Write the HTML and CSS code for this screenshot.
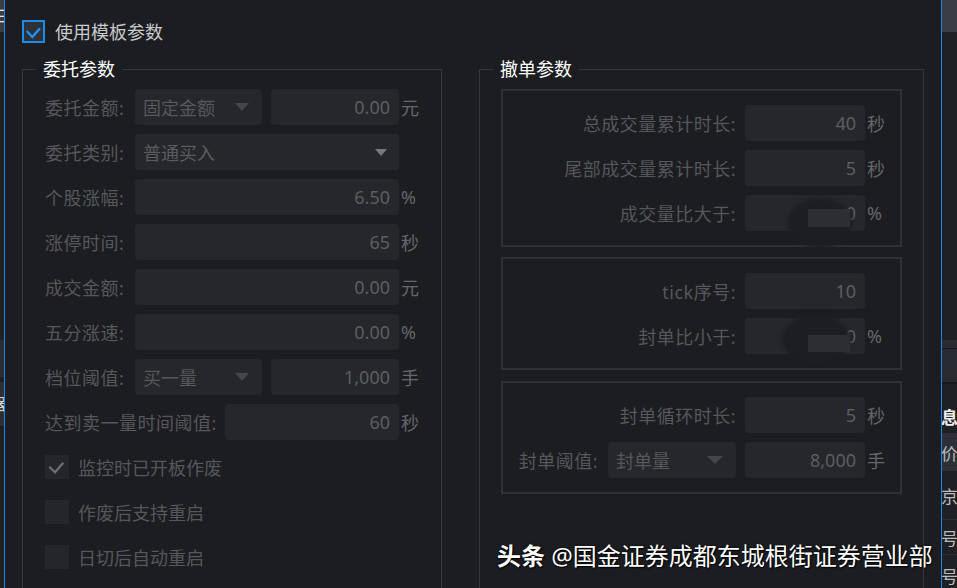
FILE: index.html
```html
<!DOCTYPE html>
<html lang="zh-CN">
<head>
    <meta charset="UTF-8">
    <title>模板参数</title>
    <link rel="stylesheet" href="styles.css">
</head>
<body>
<div class="screen">
    <!-- 背景窗口左侧残边 -->
    <div class="strip strip-left">
        <div class="sl-top">三</div>
        <div class="sl-dark"></div>
        <div class="sl-band"></div>
        <div class="sl-dark2"></div>
        <div class="sl-text">器</div>
    </div>

    <div class="dialog">
        <div class="check-main">
            <span class="box-main">
                <svg width="19" height="19" viewBox="0 0 19 19"><polyline points="2.7,9 8.3,15 16,6.3" fill="none" stroke="#1e95f4" stroke-width="2.2"/></svg>
            </span>
            使用模板参数
        </div>

        <div class="groups">
            <!-- 委托参数 -->
            <fieldset class="group group-order">
                <legend>委托参数</legend>
                <div class="group-body">
                    <div class="row">
                        <span class="label">委托金额:</span>
                        <div class="combo w-half">固定金额<i class="arrow"></i></div>
                        <div class="field w-half2">0.00</div>
                        <span class="unit">元</span>
                    </div>
                    <div class="row">
                        <span class="label">委托类别:</span>
                        <div class="combo w-full combo-open">普通买入<i class="arrow arrow-light"></i></div>
                    </div>
                    <div class="row">
                        <span class="label">个股涨幅:</span>
                        <div class="field w-full">6.50</div>
                        <span class="unit">%</span>
                    </div>
                    <div class="row">
                        <span class="label">涨停时间:</span>
                        <div class="field w-full">65</div>
                        <span class="unit">秒</span>
                    </div>
                    <div class="row">
                        <span class="label">成交金额:</span>
                        <div class="field w-full">0.00</div>
                        <span class="unit">元</span>
                    </div>
                    <div class="row">
                        <span class="label">五分涨速:</span>
                        <div class="field w-full">0.00</div>
                        <span class="unit">%</span>
                    </div>
                    <div class="row">
                        <span class="label">档位阈值:</span>
                        <div class="combo w-half">买一量<i class="arrow"></i></div>
                        <div class="field w-half2">1,000</div>
                        <span class="unit">手</span>
                    </div>
                    <div class="row">
                        <span class="label label-wide">达到卖一量时间阈值:</span>
                        <div class="field w-rest">60</div>
                        <span class="unit">秒</span>
                    </div>
                    <div class="opt">
                        <span class="opt-box">
                            <svg width="24" height="24" viewBox="0 0 24 24"><polyline points="4.3,11.7 10,17.3 18.3,7.7" fill="none" stroke="#6c6e72" stroke-width="2.2"/></svg>
                        </span>
                        监控时已开板作废
                    </div>
                    <div class="opt">
                        <span class="opt-box"></span>
                        作废后支持重启
                    </div>
                    <div class="opt">
                        <span class="opt-box"></span>
                        日切后自动重启
                    </div>
                </div>
            </fieldset>

            <!-- 撤单参数 -->
            <fieldset class="group group-cancel">
                <legend>撤单参数</legend>
                <div class="group-body">
                    <div class="sub">
                        <div class="row">
                            <span class="label">总成交量累计时长:</span>
                            <div class="field">40</div>
                            <span class="unit">秒</span>
                        </div>
                        <div class="row">
                            <span class="label">尾部成交量累计时长:</span>
                            <div class="field">5</div>
                            <span class="unit">秒</span>
                        </div>
                        <div class="row">
                            <span class="label">成交量比大于:</span>
                            <div class="field">0
                                <span class="smudge smudge-a"></span>
                                <span class="smudge-patch"></span>
                            </div>
                            <span class="unit">%</span>
                        </div>
                    </div>
                    <div class="sub">
                        <div class="row">
                            <span class="label">tick序号:</span>
                            <div class="field">10</div>
                            <span class="unit"></span>
                        </div>
                        <div class="row">
                            <span class="label">封单比小于:</span>
                            <div class="field">0
                                <span class="smudge smudge-b"></span>
                                <span class="smudge-patch patch-b"></span>
                            </div>
                            <span class="unit">%</span>
                        </div>
                    </div>
                    <div class="sub sub-last">
                        <div class="row">
                            <span class="label">封单循环时长:</span>
                            <div class="field">5</div>
                            <span class="unit">秒</span>
                        </div>
                        <div class="row">
                            <span class="label label-tight">封单阈值:</span>
                            <div class="combo">封单量<i class="arrow arrow-wide"></i></div>
                            <div class="field">8,000</div>
                            <span class="unit">手</span>
                        </div>
                    </div>
                </div>
            </fieldset>
        </div>

        <div class="watermark"><b>头条</b> @国金证券成都东城根街证券营业部</div>
    </div>

    <!-- 背景窗口右侧残边 -->
    <div class="strip strip-right">
        <div class="sr-top"></div>
        <div class="sr-dark"></div>
        <div class="sr-band"></div>
        <div class="sr-head"></div>
        <div class="sr-row sr-title"><span>信息</span></div>
        <div class="sr-row sr-active"><span>单价</span></div>
        <div class="sr-row sr-r1"><span>首京</span></div>
        <div class="sr-row sr-r2"><span>台号</span></div>
        <div class="sr-row sr-r3"><span>台号</span></div>
    </div>
</div>
</body>
</html>
```

FILE: styles.css
```css
/* base */
body {
    margin: 0;
    background: #1e2024;
    font-family: "Noto Sans", "Noto Sans CJK SC", sans-serif;
    overflow: hidden;
}
.screen {
    display: flex;
    width: 957px;
    height: 588px;
    overflow: hidden;
}

/* side strips (window behind the dialog) */
.strip {
    flex: none;
    overflow: hidden;
    display: flex;
    flex-direction: column;
}
.strip-left {
    width: 4px;
}
.sl-top {
    height: 32px;
    background: #3a3d44;
    color: #e8e8e8;
    font-size: 16px;
    line-height: 32px;
    text-indent: -9px;
}
.sl-dark {
    height: 308px;
    background: #1e2024;
}
.sl-band {
    height: 37px;
    background: #2a2d33;
}
.sl-dark2 {
    height: 5px;
    background: #1e2024;
}
.sl-text {
    height: 44px;
    background: #2c2f36;
    color: #d0d0d0;
    font-size: 16px;
    line-height: 44px;
    text-indent: -10px;
}
.strip-right {
    width: 15px;
    background: #1e2024;
}
.sr-top {
    height: 32px;
    flex: none;
    background: #3a3d44;
}
.sr-dark {
    height: 308px;
    flex: none;
}
.sr-band {
    height: 8px;
    flex: none;
    background: #282b31;
    border-bottom: 1px solid #16171a;
}
.sr-head {
    height: 33px;
    flex: none;
    background: #272a31;
    border-bottom: 2px solid #16171a;
}
.sr-row {
    flex: none;
    display: flex;
    align-items: center;
    font-size: 17px;
    color: #b9bbbe;
    white-space: nowrap;
    border-bottom: 1px solid #2a2c31;
}
.sr-row span {
    margin-left: -18px;
}
.sr-title {
    height: 49px;
    color: #f0f0f0;
    font-weight: 700;
    align-items: flex-end;
}
.sr-title span {
    line-height: 30px;
}
.sr-active {
    height: 36px;
    background: #2c2f36;
}
.sr-r1 {
    height: 48px;
}
.sr-r2 {
    height: 34px;
}
.sr-r3 {
    height: 40px;
}

/* dialog */
.dialog {
    position: relative;
    width: 938px;
    flex: none;
    box-sizing: border-box;
    padding: 20px 17px 0;
    background: #1c1d21;
    border-left: 1px solid #1c87e3;
    border-right: 1px solid #1c87e3;
}
.check-main {
    display: flex;
    align-items: center;
    gap: 10px;
    height: 23px;
    font-size: 18px;
    line-height: 22px;
    color: #c9cacc;
}
.box-main {
    width: 23px;
    height: 23px;
    box-sizing: border-box;
    border: 2px solid #1e8ce6;
    background: #2c3038;
}
.box-main svg {
    display: block;
}

.groups {
    display: flex;
    gap: 37px;
    margin-top: 14px;
}
.group {
    margin: 0;
    padding: 0;
    min-width: 0;
    height: 620px;
    box-sizing: border-box;
    border: 1px solid #34363c;
}
.group legend {
    margin-left: 13px;
    padding: 0 7px;
    font-size: 18px;
    line-height: 24px;
    color: #ffffff;
}
.group-order {
    width: 420px;
}
.group-cancel {
    width: 445px;
}
.group-body {
    padding: 8px 22px 0;
}
.group-cancel .group-body {
    padding: 8px 21px 0;
}

/* rows */
.row {
    display: flex;
    align-items: center;
    height: 36px;
    margin-bottom: 9px;
    font-size: 18px;
}
.label {
    flex: none;
    width: 90px;
    color: #55575c;
    white-space: nowrap;
    letter-spacing: 0.5px;
}
.label-wide {
    width: 180px;
}
.combo, .field {
    position: relative;
    flex: none;
    height: 36px;
    box-sizing: border-box;
    display: flex;
    align-items: center;
    background: #25272b;
    border-radius: 4px;
    font-size: 18px;
}
.field {
    justify-content: flex-end;
    padding-right: 9px;
    color: #5b5e63;
}
.combo {
    justify-content: space-between;
    padding: 0 13px 0 8px;
    color: #55585d;
}
.combo-open {
    padding-right: 12px;
    color: #5a5c61;
}
.w-half {
    width: 127px;
}
.w-half2 {
    width: 128px;
    margin-left: 9px;
}
.w-full {
    width: 264px;
}
.w-rest {
    width: 174px;
}
.unit {
    padding-left: 2px;
    color: #63666b;
}
.arrow {
    width: 0;
    height: 0;
    border-left: 7px solid transparent;
    border-right: 7px solid transparent;
    border-top: 8px solid #43464c;
}
.arrow-light {
    border-left-width: 6px;
    border-right-width: 6px;
    border-top: 7px solid #76787c;
}
.arrow-wide {
    border-left-width: 8px;
    border-right-width: 8px;
}

/* check options */
.opt {
    display: flex;
    align-items: center;
    gap: 9px;
    height: 36px;
    margin-bottom: 9px;
    font-size: 18px;
    color: #55575c;
}
.opt-box {
    width: 24px;
    height: 24px;
    background: #24262a;
}
.opt-box svg {
    display: block;
}

/* sub boxes of the cancel group */
.sub {
    border: 2px solid #2f3137;
    padding: 14px 0;
    margin-bottom: 10px;
}
.sub-last {
    margin-top: 11px;
}
.sub .row:last-child {
    margin-bottom: 0;
}
.sub .label {
    flex: 1;
    width: auto;
    text-align: right;
    margin-right: 9px;
}
.sub .label-tight {
    margin-right: 10px;
}
.sub .field {
    width: 120px;
}
.sub .combo {
    width: 128px;
    margin-right: 9px;
}
.sub .unit {
    flex: none;
    width: 35px;
    box-sizing: border-box;
}

/* mosaic left on the screenshot */
.smudge {
    position: absolute;
    border-radius: 50%;
    background: #1d1e22;
    filter: blur(2px);
}
.smudge-a {
    left: 43px;
    top: 3px;
    width: 64px;
    height: 50px;
}
.smudge-b {
    left: 37px;
    top: -3px;
    width: 68px;
    height: 48px;
}
.smudge-patch {
    position: absolute;
    left: 63px;
    top: 14px;
    width: 42px;
    height: 18px;
    background: #2c2e32;
}
.patch-b {
    top: 17px;
    height: 17px;
}

.watermark {
    position: absolute;
    left: 492px;
    top: 543px;
    font-size: 24px;
    line-height: 25px;
    color: #ffffff;
    white-space: nowrap;
    text-shadow: 0 0 2px #000, 1px 1px 1px #000;
}
.watermark b {
    font-weight: 700;
}
```
